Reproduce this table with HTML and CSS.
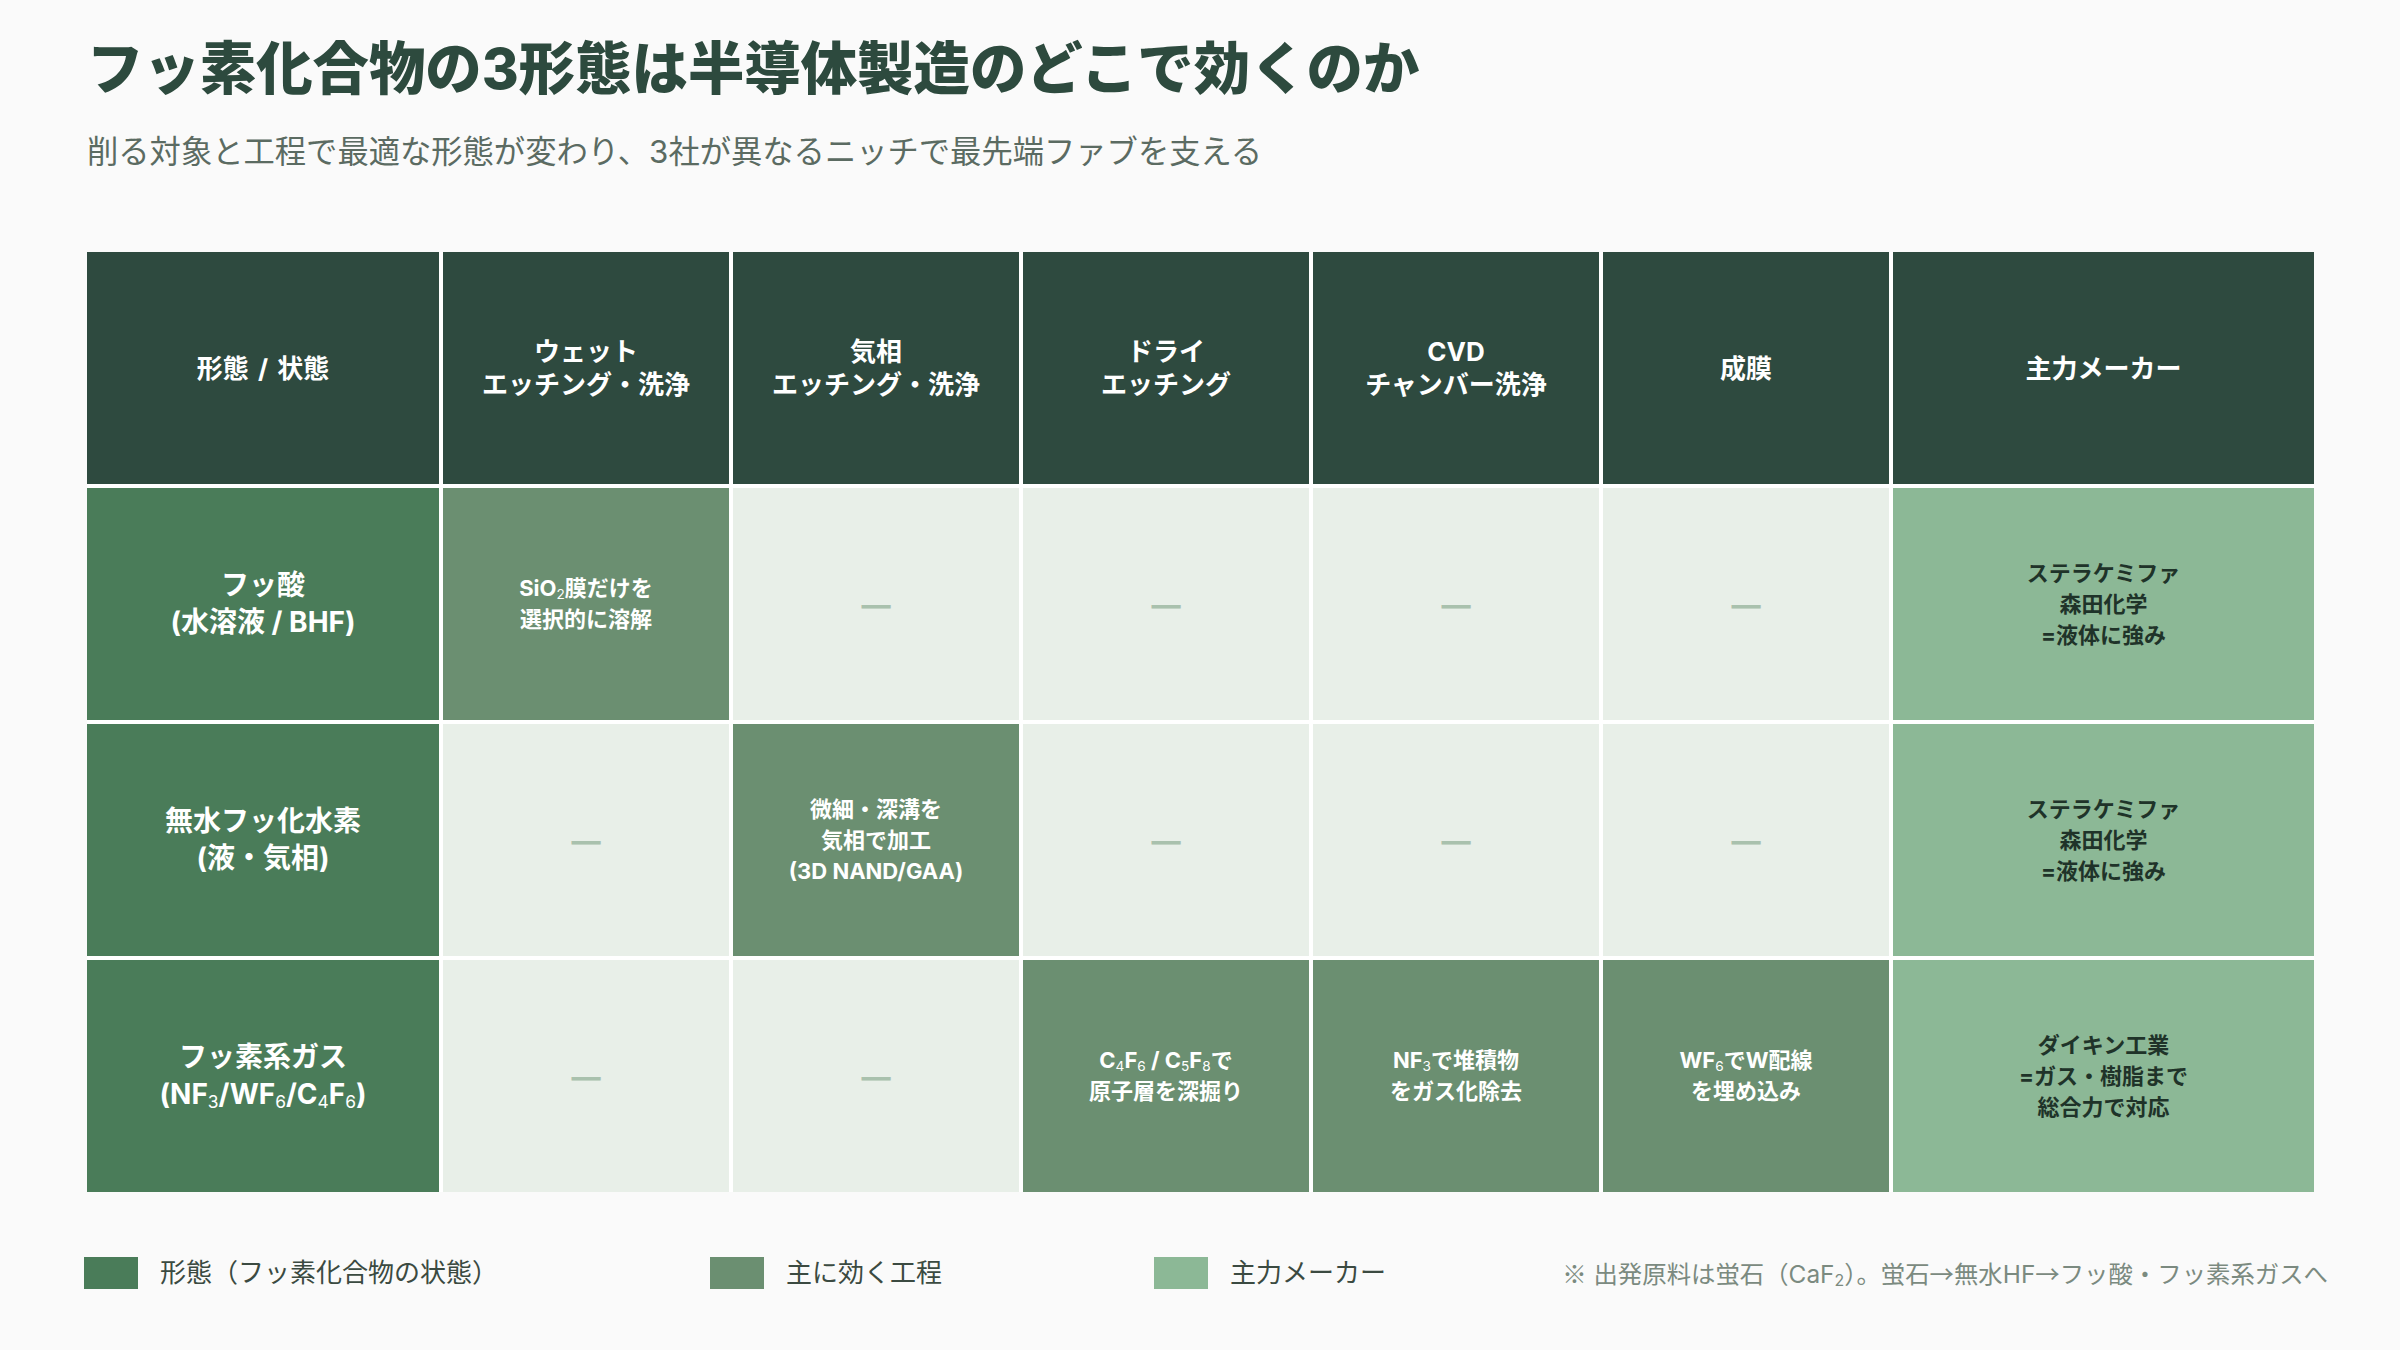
FILE: index.html
```html
<!DOCTYPE html>
<html lang="ja">
<head>
<meta charset="utf-8">
<title>フッ素化合物の3形態</title>
<link rel="stylesheet" href="styles.css">
</head>
<body>
<div class="page">
  <h1 class="title">フッ素化合物の3形態は半導体製造のどこで効くのか</h1>
  <p class="subtitle">削る対象と工程で最適な形態が変わり、3社が異なるニッチで最先端ファブを支える</p>

  <div class="matrix">
    <div class="cell th"><span class="txt">形態 / 状態</span></div>
    <div class="cell th"><span class="txt">ウェット<br>エッチング・洗浄</span></div>
    <div class="cell th"><span class="txt">気相<br>エッチング・洗浄</span></div>
    <div class="cell th"><span class="txt">ドライ<br>エッチング</span></div>
    <div class="cell th"><span class="txt">CVD<br>チャンバー洗浄</span></div>
    <div class="cell th"><span class="txt">成膜</span></div>
    <div class="cell th"><span class="txt">主力メーカー</span></div>

    <div class="cell rh"><span class="txt">フッ酸<br>(水溶液 / BHF)</span></div>
    <div class="cell on"><span class="txt">SiO<sub>2</sub>膜だけを<br>選択的に溶解</span></div>
    <div class="cell off"><span class="dash">—</span></div>
    <div class="cell off"><span class="dash">—</span></div>
    <div class="cell off"><span class="dash">—</span></div>
    <div class="cell off"><span class="dash">—</span></div>
    <div class="cell mk"><span class="txt">ステラケミファ<br>森田化学<br>=液体に強み</span></div>

    <div class="cell rh"><span class="txt">無水フッ化水素<br>(液・気相)</span></div>
    <div class="cell off"><span class="dash">—</span></div>
    <div class="cell on"><span class="txt">微細・深溝を<br>気相で加工<br>(3D NAND/GAA)</span></div>
    <div class="cell off"><span class="dash">—</span></div>
    <div class="cell off"><span class="dash">—</span></div>
    <div class="cell off"><span class="dash">—</span></div>
    <div class="cell mk"><span class="txt">ステラケミファ<br>森田化学<br>=液体に強み</span></div>

    <div class="cell rh"><span class="txt">フッ素系ガス<br>(NF<sub>3</sub>/WF<sub>6</sub>/C<sub>4</sub>F<sub>6</sub>)</span></div>
    <div class="cell off"><span class="dash">—</span></div>
    <div class="cell off"><span class="dash">—</span></div>
    <div class="cell on"><span class="txt">C<sub>4</sub>F<sub>6</sub> / C<sub>5</sub>F<sub>8</sub>で<br>原子層を深掘り</span></div>
    <div class="cell on"><span class="txt">NF<sub>3</sub>で堆積物<br>をガス化除去</span></div>
    <div class="cell on"><span class="txt">WF<sub>6</sub>でW配線<br>を埋め込み</span></div>
    <div class="cell mk"><span class="txt">ダイキン工業<br>=ガス・樹脂まで<br>総合力で対応</span></div>
  </div>

  <div class="legend">
    <div class="legend-item"><span class="swatch sw-form"></span><span class="legend-label">形態（フッ素化合物の状態）</span></div>
    <div class="legend-item"><span class="swatch sw-proc"></span><span class="legend-label">主に効く工程</span></div>
    <div class="legend-item"><span class="swatch sw-maker"></span><span class="legend-label">主力メーカー</span></div>
    <div class="note"><span class="sym">※</span> 出発原料は蛍石（CaF<sub>2</sub>）。蛍石<span class="sym">→</span>無水HF<span class="sym">→</span>フッ酸・フッ素系ガスへ</div>
  </div>
</div>
</body>
</html>
```

FILE: styles.css
```css
* {
  box-sizing: border-box;
}

html, body {
  margin: 0;
  padding: 0;
  background: #fafafa;
}

body {
  font-family: Inter, "Noto Sans CJK JP", sans-serif;
  color: #2d4a3e;
}

.page {
  width: 2400px;
  height: 1350px;
  padding: 35px 86px 0 87px;
}

.title {
  margin: 0;
  font-size: 56.4px;
  line-height: 67px;
  font-weight: 800;
  color: #2d4a3e;
}

.subtitle {
  margin: 29px 0 0 0;
  font-size: 31.3px;
  line-height: 43px;
  font-weight: 400;
  color: #5b6b62;
}

.matrix {
  margin-top: 78px;
  display: grid;
  grid-template-columns: 352px repeat(5, 286px) 421px;
  grid-template-rows: repeat(4, 232px);
  gap: 4px;
  background: #ffffff;
  width: 2227px;
}

.cell {
  display: flex;
  align-items: center;
  justify-content: center;
  text-align: center;
  font-weight: 700;
}

.txt {
  display: block;
}

.cell sub {
  font-size: 0.62em;
  vertical-align: -0.22em;
  line-height: 0;
  font-weight: 400;
}

.th {
  background: #2e4a3f;
  color: #ffffff;
  font-size: 26px;
  line-height: 33px;
  word-spacing: 3px;
}

.rh {
  background: #4a7c59;
  color: #ffffff;
  font-size: 28px;
  line-height: 37px;
}

.on {
  background: #6b8f71;
  color: #ffffff;
  font-size: 22px;
  line-height: 31px;
}

.off {
  background: #e8efe8;
}

.dash {
  font-family: "Noto Sans CJK JP", sans-serif;
  font-size: 36px;
  line-height: 1;
  font-weight: 700;
  color: #a9c1ad;
  margin-bottom: 6px;
}

.mk {
  background: #8cb896;
  color: #1f3329;
  font-size: 22px;
  line-height: 31px;
}

.legend {
  margin-top: 63px;
  display: flex;
  align-items: center;
  width: 2244px;
  margin-left: -3px;
  white-space: nowrap;
}

.legend-item {
  display: flex;
  align-items: center;
  gap: 22px;
  margin-right: 212px;
  flex-shrink: 0;
}

.legend-item:nth-child(3) {
  margin-right: 0;
}

.swatch {
  display: block;
  width: 54px;
  height: 32px;
  flex-shrink: 0;
}

.sw-form { background: #4a7c59; }
.sw-proc { background: #6b8f71; }
.sw-maker { background: #8cb896; }

.legend-label {
  font-size: 26px;
  line-height: 36px;
  color: #3b4a41;
}

.note {
  margin-left: auto;
  flex-shrink: 0;
  font-size: 24.4px;
  line-height: 34px;
  color: #7b8a80;
}

.sym {
  font-family: "Noto Sans CJK JP", sans-serif;
}

.note sub {
  font-size: 0.65em;
  vertical-align: -0.2em;
  line-height: 0;
}
```
